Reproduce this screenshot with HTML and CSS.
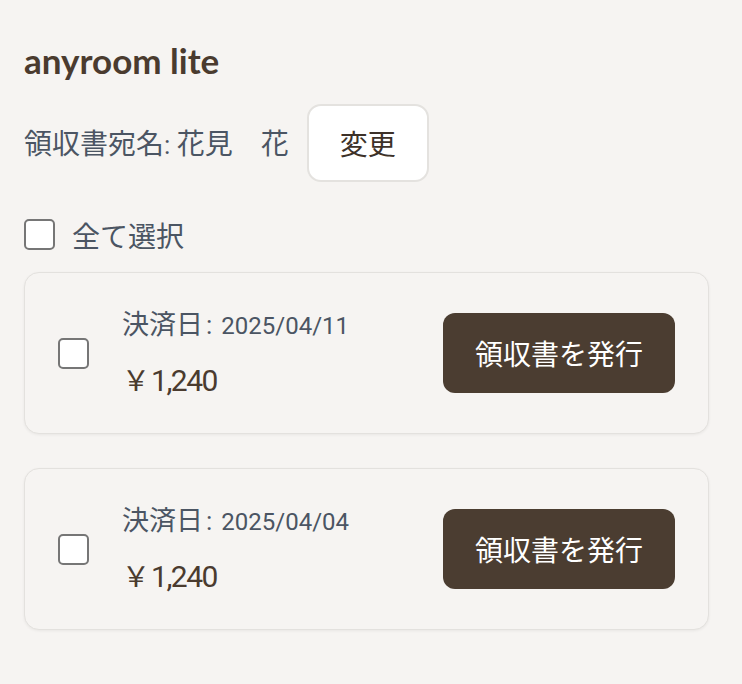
FILE: index.html
```html
<!DOCTYPE html>
<html lang="ja">
<head>
<meta charset="utf-8">
<title>anyroom lite</title>
<link rel="stylesheet" href="styles.css">
</head>
<body>
<main class="page">
  <h1 class="title">anyroom lite</h1>
  <div class="name-row">
    <span class="name-text">領収書宛名<span class="colon">: </span>花見　花</span>
    <button class="change-btn" type="button">変更</button>
  </div>
  <label class="select-all">
    <input class="check" type="checkbox">
    <span class="select-label">全て選択</span>
  </label>
  <div class="card-list">
    <div class="card">
      <input class="check" type="checkbox">
      <div class="info">
        <div class="date">決済日<span class="sep">:</span><span class="num">2025/04/11</span></div>
        <div class="amount">￥<span class="amount-num">1,240</span></div>
      </div>
      <button class="issue-btn" type="button">領収書を発行</button>
    </div>
    <div class="card">
      <input class="check" type="checkbox">
      <div class="info">
        <div class="date">決済日<span class="sep">:</span><span class="num">2025/04/04</span></div>
        <div class="amount">￥<span class="amount-num">1,240</span></div>
      </div>
      <button class="issue-btn" type="button">領収書を発行</button>
    </div>
  </div>
</main>
</body>
</html>
```
FILE: styles.css
```css
* { box-sizing: border-box; }
html, body {
  margin: 0;
  padding: 0;
  background: #f6f4f2;
}
body {
  font-family: "Noto Sans CJK JP", Roboto, sans-serif;
  color: #4b5563;
}
.page {
  width: 742px;
  padding: 39px 33px 40px 24px;
}
.title {
  margin: 0;
  font-family: Lato, "Noto Sans CJK JP", sans-serif;
  font-weight: 700;
  font-size: 35px;
  line-height: 42px;
  color: #4a3b2f;
}
.name-row {
  display: flex;
  align-items: center;
  gap: 18px;
  margin-top: 23px;
}
.name-text {
  font-size: 28px;
  line-height: 40px;
  color: #4b5563;
}
.colon {
  font-family: Roboto, sans-serif;
  font-size: 26px;
}
.change-btn {
  width: 122px;
  height: 78px;
  background: #ffffff;
  border: 2px solid #e4e2df;
  border-radius: 14px;
  font-family: "Noto Sans CJK JP", sans-serif;
  font-size: 28px;
  color: #3d3128;
  padding: 0;
}
.select-all {
  display: flex;
  align-items: center;
  gap: 17px;
  margin-top: 37px;
  height: 31px;
}
.select-label {
  font-size: 28px;
  line-height: 40px;
  color: #4b5563;
}
.check {
  appearance: none;
  -webkit-appearance: none;
  margin: 0;
  width: 31px;
  height: 31px;
  flex: none;
  background: #ffffff;
  border: 2px solid #767676;
  border-radius: 5px;
}
.card-list {
  display: flex;
  flex-direction: column;
  gap: 34px;
  margin-top: 22px;
}
.card {
  display: flex;
  align-items: center;
  height: 162px;
  padding: 0 33px 0 33px;
  border: 1.5px solid #e3e1de;
  border-radius: 15px;
  background: #f6f4f2;
  box-shadow: 0 1px 3px rgba(0, 0, 0, 0.06);
}
.info {
  flex: 1;
  display: flex;
  flex-direction: column;
  gap: 15px;
  margin-left: 33px;
}
.date {
  font-size: 27px;
  line-height: 36px;
  color: #4b5563;
}
.sep {
  font-family: Roboto, sans-serif;
  font-size: 26px;
  margin: 0 9px 0 3px;
}
.num {
  font-family: Roboto, sans-serif;
  font-size: 24px;
}
.amount {
  font-size: 28px;
  line-height: 40px;
  color: #4a3b2f;
}
.amount-num {
  font-family: Roboto, sans-serif;
  font-size: 30px;
  letter-spacing: -1.5px;
  margin-left: 1px;
}
.issue-btn {
  width: 232px;
  height: 80px;
  background: #4b3d31;
  color: #ffffff;
  border: none;
  border-radius: 12px;
  font-family: "Noto Sans CJK JP", sans-serif;
  font-size: 28px;
  padding: 0;
}
```
